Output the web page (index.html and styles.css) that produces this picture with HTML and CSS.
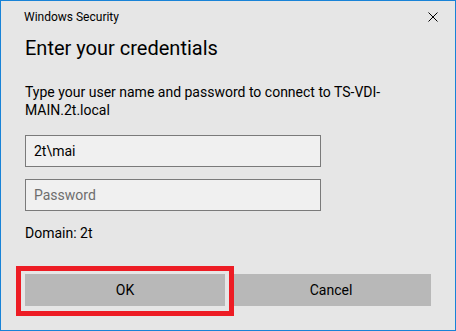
FILE: index.html
```html
<!DOCTYPE html>
<html lang="en">
<head>
  <meta charset="UTF-8">
  <meta name="viewport" content="width=device-width, initial-scale=1.0">
  <title>Windows Security</title>
  <link rel="stylesheet" href="styles.css">
</head>
<body>
  <div class="window">
    <div class="titlebar">
      <span class="title">Windows Security</span>
      <svg class="close" width="10" height="10" viewBox="0 0 10 10">
        <path d="M0.5 0.5 L9.5 9.5 M9.5 0.5 L0.5 9.5" stroke="#000" stroke-width="1" fill="none"/>
      </svg>
    </div>

    <div class="content">
      <h1>Enter your credentials</h1>
      <p class="message">Type your user name and password to connect to TS-VDI-MAIN.2t.local</p>

      <div class="field">2t\mai</div>
      <div class="field placeholder">Password</div>

      <div class="domain">Domain: 2t</div>

      <div class="buttons">
        <div class="button">OK</div>
        <div class="button">Cancel</div>
      </div>
    </div>

    <!-- red annotation box drawn over the OK button -->
    <div class="highlight"></div>
  </div>
</body>
</html>
```
FILE: styles.css
```css
body {
  margin: 0;
  font-family: Roboto, "Noto Sans", sans-serif;
  color: #000;
}
.window {
  position: relative;
  box-sizing: border-box;
  width: 456px;
  height: 331px;
  border: 1px solid #1883d7;
  background-color: #e6e6e6;
}
.titlebar {
  display: flex;
  justify-content: space-between;
  align-items: flex-start;
  height: 34px;
  box-sizing: border-box;
  padding: 8px 17px 0 23px;
}
.title {
  font-size: 12px;
  line-height: 16px;
}
.close {
  margin-top: 3px;
}
.content {
  padding: 0 23px 0 24px;
}
h1 {
  margin: 0;
  font-size: 20px;
  line-height: 26px;
  font-weight: normal;
}
.message {
  margin: 22px 0 0 0;
  font-size: 14px;
  line-height: 18px;
}
.field {
  box-sizing: border-box;
  width: 296px;
  height: 32px;
  margin-top: 16px;
  padding: 0 8px;
  border: 1px solid #7a7a7a;
  background-color: #f0f0f0;
  font-size: 14px;
  line-height: 30px;
}
.field + .field {
  margin-top: 12px;
}
.placeholder {
  color: #6d6d6d;
}
.domain {
  margin-top: 13px;
  font-size: 14px;
  line-height: 18px;
}
.buttons {
  display: flex;
  gap: 6px;
  margin-top: 32px;
}
.button {
  width: 200px;
  height: 32px;
  background-color: #b8b8b8;
  font-size: 14px;
  line-height: 32px;
  text-align: center;
}
.highlight {
  position: absolute;
  left: 15px;
  top: 265px;
  width: 218px;
  height: 50px;
  box-sizing: border-box;
  border: 5px solid #ed1c24;
}
```
